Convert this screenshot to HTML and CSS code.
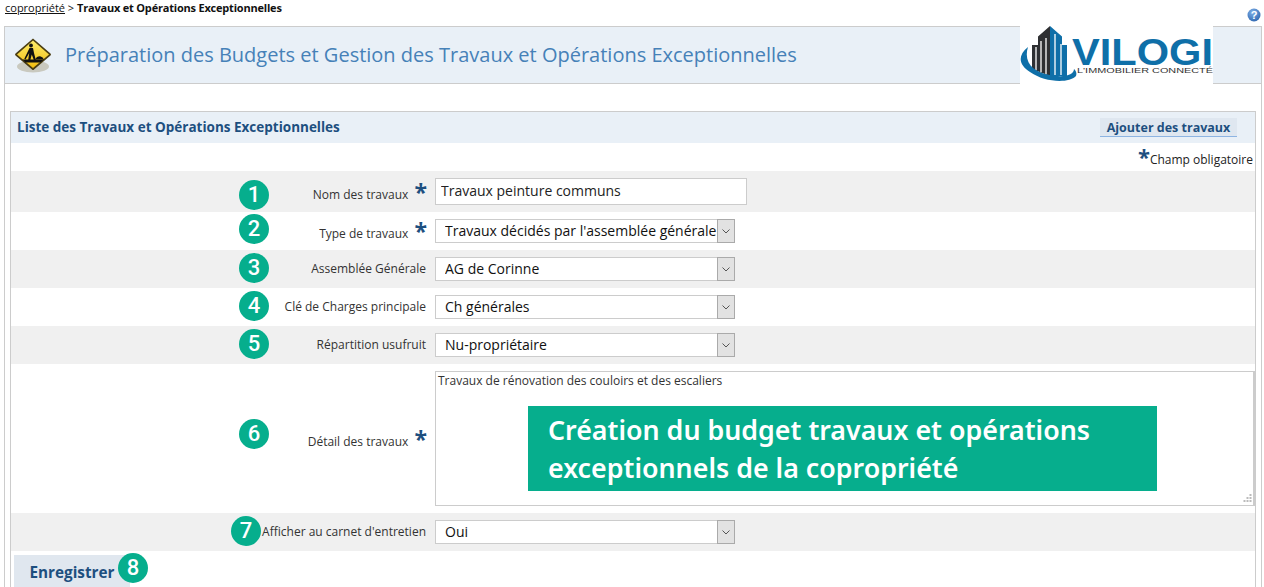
FILE: index.html
```
<!DOCTYPE html>
<html lang="fr">
<head>
<meta charset="utf-8">
<title>Travaux et Opérations Exceptionnelles</title>
<link rel="stylesheet" href="styles.css">
</head>
<body>
<div class="crumbs">
  <div class="crumb-text"><a href="#">copropriété</a> &gt; <b>Travaux et Opérations Exceptionnelles</b></div>
  <svg class="help" viewBox="0 0 14 14" width="14" height="14" aria-label="Aide"><defs><radialGradient id="hg" cx="40%" cy="30%" r="80%"><stop offset="0" stop-color="#7fb0e8"/><stop offset="1" stop-color="#2a62ac"/></radialGradient></defs><circle cx="7" cy="7" r="6.5" fill="url(#hg)"/><text x="7" y="11" text-anchor="middle" class="help-q">?</text></svg>
</div>
<main class="panel">
  <header class="page-head">
    <svg class="sign" viewBox="0 0 38 36" width="38" height="36" aria-hidden="true">
      <defs><linearGradient id="sg" x1="0" y1="0" x2="0" y2="1"><stop offset="0" stop-color="#fdec6a"/><stop offset="1" stop-color="#f2bd10"/></linearGradient></defs>
      <ellipse cx="19" cy="28.500" rx="16" ry="6" fill="#c9c9bf"/>
      <path d="M19 .5 L36.500 15.500 Q37.500 16.500 36.500 17.500 L20 31.500 Q19 32.500 18 31.500 L1.500 17.500 Q.5 16.500 1.500 15.500 Z" fill="#4a3d12"/>
      <path d="M19 2.500 L35 16.500 L19 30 L3 16.500 Z" fill="url(#sg)"/>
      <circle cx="17" cy="7.500" r="1.900" fill="#111"/>
      <path d="M15.500 10 L19 10 L20 15 L21.800 22 L19.800 22 L17.800 16.500 L16.300 22 L14.200 22 L15.200 15 L11.500 21.500 L10.300 20.800 Z" fill="#111"/>
      <path d="M21 21.500 Q24 16 28.500 19.500 L30 21.500 Z" fill="#111"/>
      <path d="M8.500 21.500 L30 21.500 L26.500 24.500 L11.500 24.500 Z" fill="#111"/>
    </svg>
    <h1 class="page-title">Préparation des Budgets et Gestion des Travaux et Opérations Exceptionnelles</h1>
    <svg class="logo" viewBox="0 0 193 58" width="193" height="58" role="img" aria-label="Vilogi">
      <rect width="193" height="58" fill="#fff"/>
      <path d="M30 0 L30 50 L12 43 L12 19 L18 19 L18 10.500 Z" fill="#2f3033"/>
      <path d="M30 0 L42 10.500 L42 19 L47 19 L47 50 L30 50 Z" fill="#0f6fa8"/>
      <path d="M16 21 V44 M21 15 V46 M26 12 V48 M35 8 V49 M41 18 V49" stroke="#fff" stroke-width="1.300" fill="none"/>
      <path d="M8 21 C-3 30 -1 39 10 46 C24 56 48 58 56 50 C57 47 56 45 54 43 C54 49 44 52 30 49 C14 46 3 37 8 21 Z" fill="#0f6fa8"/>
      <text x="52" y="38.500" textLength="141" lengthAdjust="spacingAndGlyphs" class="logo-name">VILOGI</text>
      <text x="57" y="46.500" textLength="136" lengthAdjust="spacingAndGlyphs" class="logo-tag">L'IMMOBILIER CONNECTÉ</text>
    </svg>
  </header>

  <section class="card">
    <div class="card-head">
      <h2 class="card-title">Liste des Travaux et Opérations Exceptionnelles</h2>
      <button class="add-btn" type="button">Ajouter des travaux</button>
    </div>
    <div class="legend"><span class="legend-star">*</span>Champ obligatoire</div>

    <form class="form">
      <div class="row row-name shade">
        <span class="badge badge-one">1</span>
        <label class="label">Nom des travaux <span class="req">*</span></label>
        <input class="text-input" type="text" value="Travaux peinture communs">
      </div>
      <div class="row row-type">
        <span class="badge badge-two">2</span>
        <label class="label">Type de travaux <span class="req">*</span></label>
        <div class="select"><span class="select-value">Travaux décidés par l'assemblée générale</span><span class="arrow"><svg viewBox="0 0 8 5" width="8" height="5"><path d="M.5.5 4 4 7.500.5" fill="none" stroke="#555"/></svg></span></div>
      </div>
      <div class="row shade">
        <span class="badge">3</span>
        <label class="label">Assemblée Générale</label>
        <div class="select"><span class="select-value">AG de Corinne</span><span class="arrow"><svg viewBox="0 0 8 5" width="8" height="5"><path d="M.5.5 4 4 7.500.5" fill="none" stroke="#555"/></svg></span></div>
      </div>
      <div class="row">
        <span class="badge">4</span>
        <label class="label">Clé de Charges principale</label>
        <div class="select"><span class="select-value">Ch générales</span><span class="arrow"><svg viewBox="0 0 8 5" width="8" height="5"><path d="M.5.5 4 4 7.500.5" fill="none" stroke="#555"/></svg></span></div>
      </div>
      <div class="row shade">
        <span class="badge">5</span>
        <label class="label">Répartition usufruit</label>
        <div class="select"><span class="select-value">Nu-propriétaire</span><span class="arrow"><svg viewBox="0 0 8 5" width="8" height="5"><path d="M.5.5 4 4 7.500.5" fill="none" stroke="#555"/></svg></span></div>
      </div>
      <div class="row row-detail">
        <span class="badge badge-detail">6</span>
        <label class="label">Détail des travaux <span class="req">*</span></label>
        <div class="area-wrap">
          <textarea class="area" readonly>Travaux de rénovation des couloirs et des escaliers</textarea>
          <svg class="grip" viewBox="0 0 9 9" width="9" height="9" aria-hidden="true"><path d="M6.500 0h2v2h-2zM3.500 3h2v2h-2zM6.500 3h2v2h-2zM0.500 6h2v2h-2zM3.500 6h2v2h-2zM6.500 6h2v2h-2z" fill="#bbb"/></svg>
        </div>
      </div>
      <div class="row shade">
        <span class="badge badge-seven">7</span>
        <label class="label">Afficher au carnet d'entretien</label>
        <div class="select"><span class="select-value">Oui</span><span class="arrow"><svg viewBox="0 0 8 5" width="8" height="5"><path d="M.5.5 4 4 7.500.5" fill="none" stroke="#555"/></svg></span></div>
      </div>
      <div class="actions">
        <button class="save-btn" type="button">Enregistrer</button>
        <span class="badge badge-save">8</span>
      </div>
    </form>
  </section>
</main>
<div class="callout">Création du budget travaux et opérations exceptionnels de la copropriété</div>
</body>
</html>
```
FILE: styles.css
```
* { box-sizing: border-box; }
html, body { height: 587px; overflow: hidden; }
body { margin: 0; background: #fff; font-family: "Open Sans", "Noto Sans", sans-serif; color: #222; position: relative; }

.crumbs { height: 26px; display: flex; justify-content: space-between; padding: 0 3px 0 5px; }
.crumb-text { font-size: 11px; line-height: 15px; color: #111; }
.crumb-text a { color: #111; }
.crumb-text b { font-weight: 700; letter-spacing: -0.2px; }
.help { margin-top: 8px; }
.help-q { font: 700 11px "Liberation Sans", sans-serif; fill: #fff; }

.panel { margin-left: 4px; width: 1258px; height: 561px; border: 1px solid #ccc; border-bottom: 0; }
.page-head { height: 57px; background: #e9f0f7; border-bottom: 1px solid #ccc; display: flex; align-items: center; padding-left: 9px; }
.sign { flex: none; margin-top: 1px; }
.page-title { margin: 0 0 0 13px; font-size: 20px; font-weight: 400; color: #4681b8; white-space: nowrap; line-height: 28px; flex: 1; }
.logo { flex: none; margin: -1px 48px 0 0; align-self: flex-start; display: block; overflow: hidden; }
.logo-name { font: 700 36px "Liberation Sans", sans-serif; fill: #0f6fa8; }
.logo-tag { font: 400 6.500px "Liberation Sans", sans-serif; fill: #333; }

.card { margin: 27px 0 0 5px; width: 1246px; border: 1px solid #ccc; border-bottom: 0; height: 476px; }
.card-head { height: 31px; background: #e9f0f7; display: flex; align-items: center; justify-content: space-between; padding: 0 18px 0 6px; }
.card-title { margin: 0 0 2px; font-size: 13.500px; font-weight: 700; color: #1d4f7f; }
.add-btn { height: 19px; width: 137px; padding: 0; border: 0; border-bottom: 1px solid #8db4e2; background: #dfe7f0; color: #1d4f7f; font: 700 12.500px "Open Sans", sans-serif; }

.legend { height: 28px; text-align: right; padding-right: 2px; font-size: 12px; line-height: 34px; color: #222; white-space: nowrap; }
.legend-star { font-size: 22px; font-weight: 700; color: #1d4f7f; line-height: 0; vertical-align: -1px; }

.row { position: relative; height: 38px; display: grid; grid-template-columns: 415px 1fr; column-gap: 9px; align-items: start; padding-top: 7px; }
.shade { background: #f0f0f0; }
.row-name { height: 41px; }
.row-detail { height: 149px; }
.label { font-size: 12px; line-height: 16px; text-align: right; color: #333; padding-top: 4px; white-space: nowrap; }
.row-name .label { padding-top: 9px; }
.row-type .label { padding-top: 7px; }
.row-detail .label { padding-top: 63px; }
.req { font-size: 23px; font-weight: 700; color: #1d4f7f; line-height: 0; vertical-align: -2px; margin: 0 -1px 0 3px; }

.text-input { width: 312px; height: 27px; border: 1px solid #ccc; padding: 0 5px 2px; font: 14px "Open Sans", sans-serif; color: #222; background: #fff; border-radius: 0; outline: 0; }
.select { width: 300px; height: 24px; border: 1px solid #ccc; background: #fff; display: flex; align-items: center; padding-left: 9px; font-size: 14px; color: #111; }
.select-value { flex: 1; overflow: hidden; white-space: nowrap; line-height: 22px; }
.arrow { flex: none; width: 18px; height: 24px; margin-right: -1px; background: #e2e2e2; border: 1px solid #aaa; display: flex; align-items: center; justify-content: center; }
.arrow svg { display: block; }

.area-wrap { position: relative; width: 820px; height: 135px; }
.area { display: block; width: 100%; height: 100%; border: 1px solid #ccc; border-right-width: 2px; resize: none; padding: 1px 2px 0; font: 12px/15px "Open Sans", sans-serif; color: #333; background: #fff; outline: 0; }
.grip { position: absolute; right: 3px; bottom: 3px; }

.badge { position: absolute; left: 228px; top: 3px; width: 30px; height: 30px; border-radius: 50%; background: #06ae8d; color: #fff; font: 500 22px/30px Roboto, sans-serif; text-align: center; }
.badge-one { top: 9px; }
.badge-two { top: 2px; }
.badge-detail { top: 55px; }
.badge-seven { left: 220px; top: 3px; }
.actions { position: relative; padding-top: 4px; padding-left: 3px; }
.save-btn { display: block; width: 116px; height: 32px; padding: 2px 0 0; border: 0; background: #e0e7ef; color: #1d4f7f; font: 700 15.300px "Open Sans", sans-serif; }
.badge-save { left: 107px; top: 2px; }

.callout { position: absolute; left: 528px; top: 406px; width: 629px; height: 85px; background: #06ae8d; color: #fff; font-family: "Noto Sans", sans-serif; font-weight: 600; font-size: 26.800px; line-height: 38px; padding: 5px 20px; }
```
